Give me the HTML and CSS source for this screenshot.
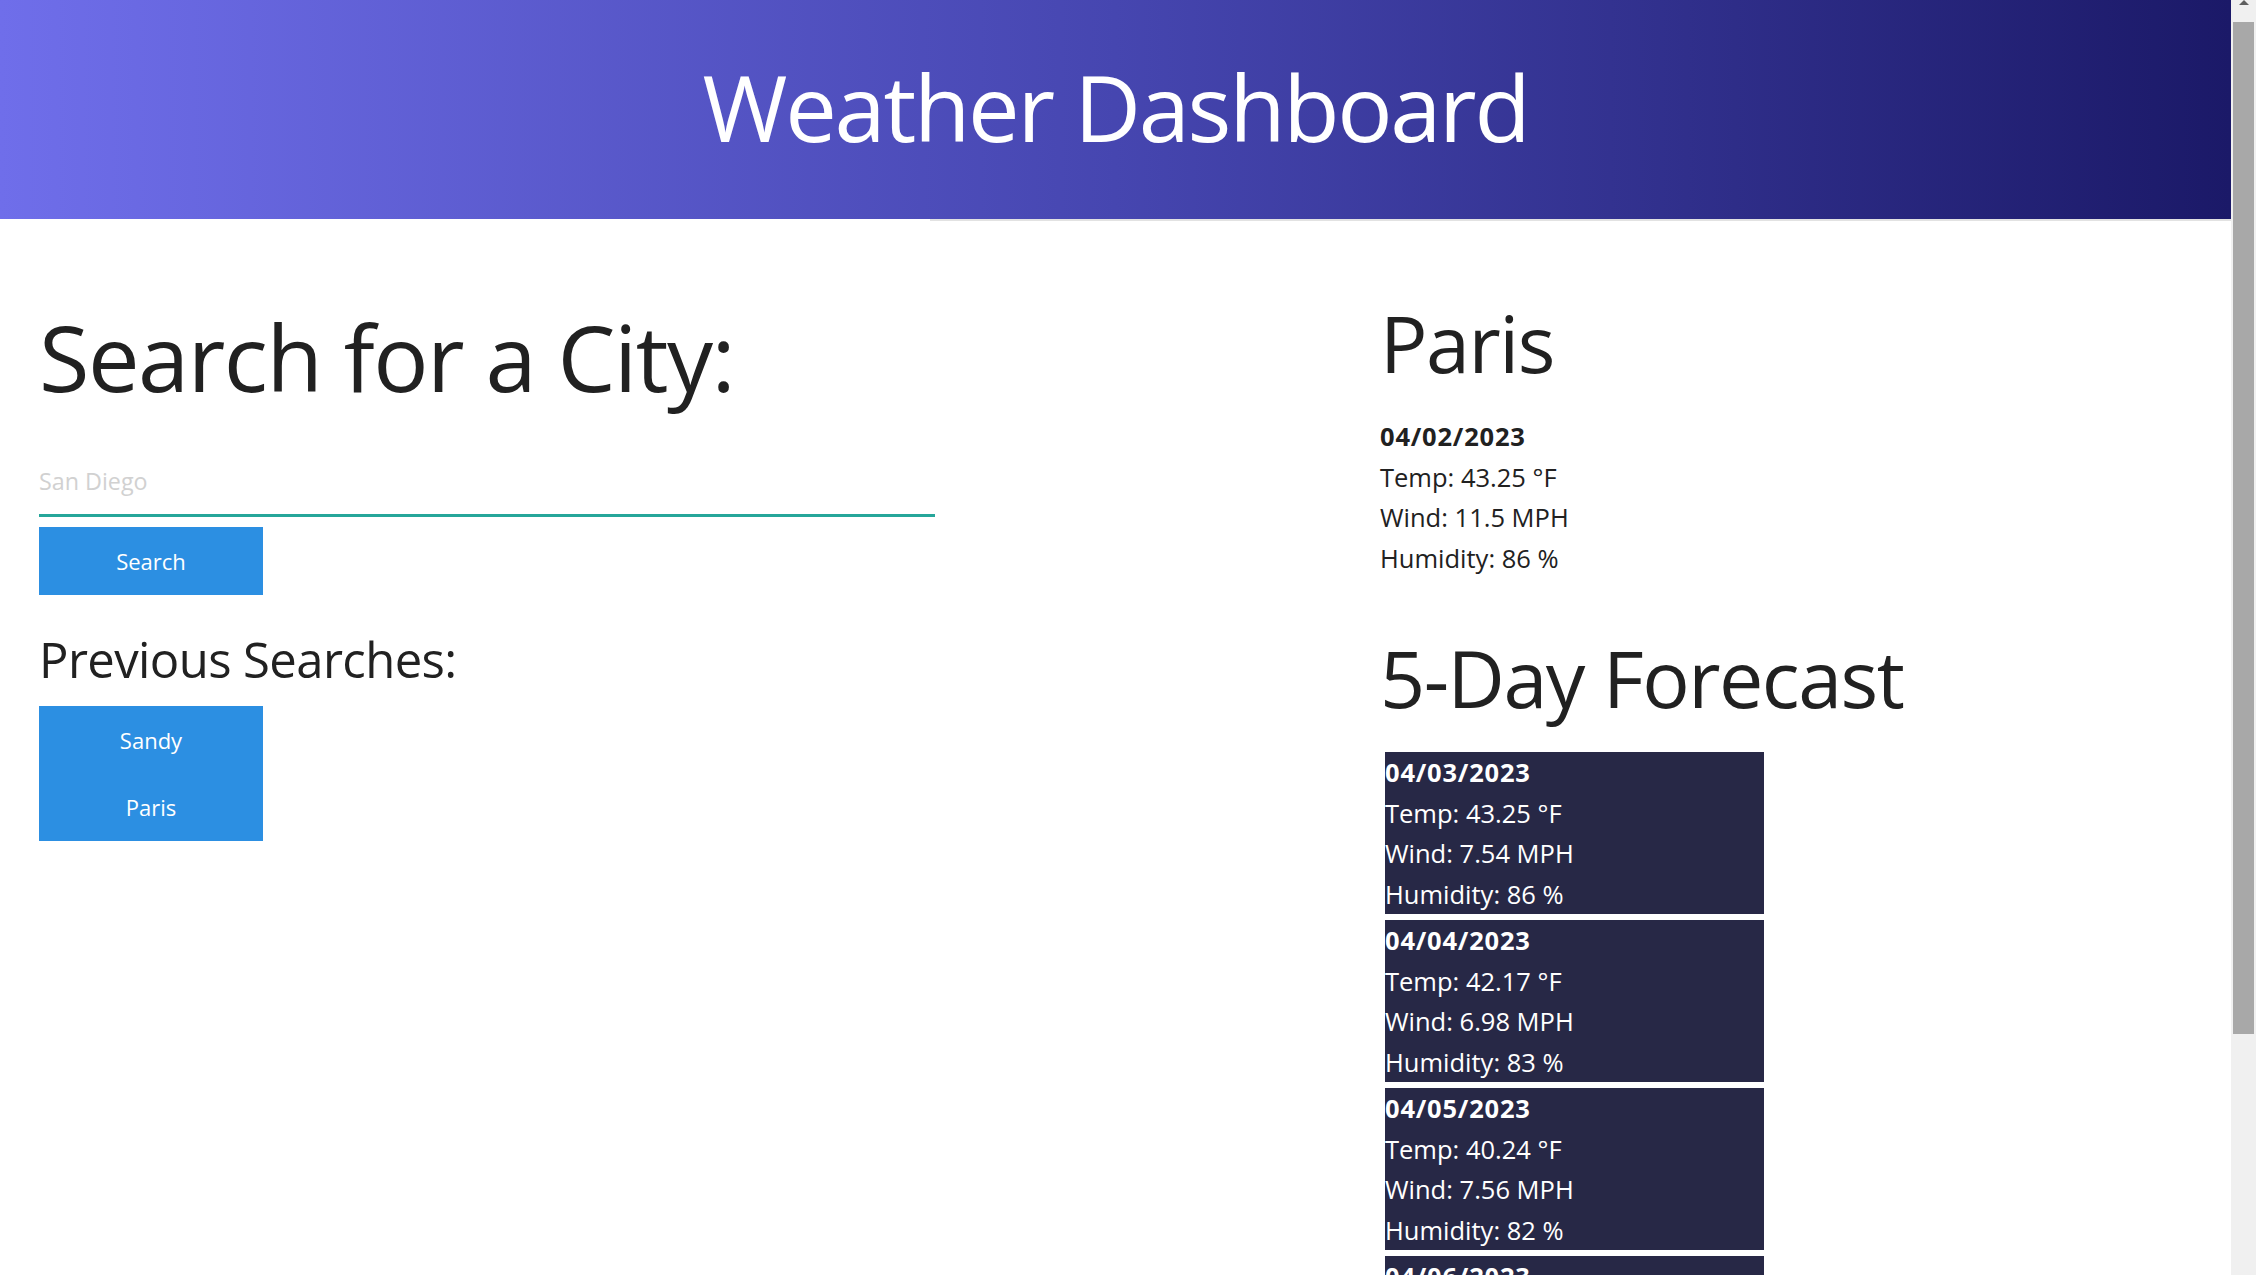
FILE: index.html
```html
<!DOCTYPE html>
<html lang="en">
<head>
<meta charset="utf-8">
<title>Weather Dashboard</title>
<link rel="stylesheet" href="styles.css">
</head>
<body>
  <div class="page">
    <header class="hero">
      <h1 class="hero-title">Weather Dashboard</h1>
    </header>
    <div class="hero-rule"></div>
    <main class="content">
      <section class="search-col">
        <h1 class="search-title">Search for a City:</h1>
        <input class="city-input" type="text" placeholder="San Diego">
        <button class="btn">Search</button>
        <h4 class="prev-title">Previous Searches:</h4>
        <div class="history">
          <button class="btn">Sandy</button>
          <button class="btn">Paris</button>
        </div>
      </section>
      <section class="weather-col">
        <h2 class="city-name">Paris</h2>
        <div class="today">
          <p class="line date">04/02/2023</p>
          <p class="line">Temp: 43.25 °F</p>
          <p class="line">Wind: 11.5 MPH</p>
          <p class="line">Humidity: 86 %</p>
        </div>
        <h2 class="forecast-title">5-Day Forecast</h2>
        <div class="forecast">
          <div class="card">
            <p class="line date">04/03/2023</p>
            <p class="line">Temp: 43.25 °F</p>
            <p class="line">Wind: 7.54 MPH</p>
            <p class="line">Humidity: 86 %</p>
          </div>
          <div class="card">
            <p class="line date">04/04/2023</p>
            <p class="line">Temp: 42.17 °F</p>
            <p class="line">Wind: 6.98 MPH</p>
            <p class="line">Humidity: 83 %</p>
          </div>
          <div class="card">
            <p class="line date">04/05/2023</p>
            <p class="line">Temp: 40.24 °F</p>
            <p class="line">Wind: 7.56 MPH</p>
            <p class="line">Humidity: 82 %</p>
          </div>
          <div class="card">
            <p class="line date">04/06/2023</p>
            <p class="line">Temp: 44.31 °F</p>
            <p class="line">Wind: 8.12 MPH</p>
            <p class="line">Humidity: 79 %</p>
          </div>
          <div class="card">
            <p class="line date">04/07/2023</p>
            <p class="line">Temp: 46.02 °F</p>
            <p class="line">Wind: 9.03 MPH</p>
            <p class="line">Humidity: 74 %</p>
          </div>
        </div>
      </section>
    </main>
  </div>
  <div class="scrollbar">
    <div class="scroll-arrow"></div>
    <div class="scroll-thumb"></div>
  </div>
</body>
</html>
```

FILE: styles.css
```css
html, body {
  margin: 0;
  padding: 0;
  height: 100%;
}

body {
  display: flex;
  overflow: hidden;
  font-family: "Open Sans", "Noto Sans", "DejaVu Sans", sans-serif;
  color: #212121;
  background: #ffffff;
}

.page {
  flex: 1;
  min-width: 0;
  height: 100vh;
  overflow: hidden;
}

/* Header */
.hero {
  height: 219px;
  box-sizing: border-box;
  padding-top: 58px;
  background: linear-gradient(to right, #6f6eea 0%, #4646b0 50%, #1b1968 100%);
  text-align: center;
}

.hero-title {
  margin: 0;
  font-size: 92px;
  line-height: 98px;
  font-weight: 400;
  letter-spacing: -2.3px;
  color: #ffffff;
}

.hero-rule {
  height: 2px;
  background: linear-gradient(to right, transparent 930px, #e2e2e2 930px);
}

/* Main two-column area */
.content {
  display: grid;
  grid-template-columns: 1380px 1fr;
}

.search-col {
  padding-left: 39px;
  display: flex;
  flex-direction: column;
  align-items: flex-start;
}

.search-title {
  margin: 81px 0 0 0;
  font-size: 92px;
  line-height: 110px;
  font-weight: 400;
  letter-spacing: -1.5px;
}

.city-input {
  margin-top: 41px;
  width: 896px;
  height: 64px;
  box-sizing: border-box;
  padding: 0 0 6px 0;
  border: none;
  border-bottom: 3px solid #26a69a;
  outline: none;
  font-family: inherit;
  font-size: 23.3px;
  color: #212121;
  background: transparent;
}

.city-input::placeholder {
  color: #d1d1d1;
}

.btn {
  width: 224px;
  height: 68px;
  border: none;
  border-radius: 0;
  background: #2c8fe2;
  color: #ffffff;
  font-family: inherit;
  font-size: 22px;
  padding: 0;
  margin: 0;
  cursor: pointer;
}

.city-input + .btn {
  margin-top: 10px;
}

.prev-title {
  margin: 34px 0 0 0;
  font-size: 49px;
  line-height: 60px;
  font-weight: 400;
  letter-spacing: -0.6px;
}

.history {
  margin-top: 17px;
  display: flex;
  flex-direction: column;
}

.history .btn {
  height: 67.5px;
}

/* Right column */
.weather-col {
  display: flex;
  flex-direction: column;
  align-items: flex-start;
}

.city-name,
.forecast-title {
  margin: 0;
  font-size: 79px;
  line-height: 94px;
  font-weight: 400;
  letter-spacing: -1.5px;
}

.city-name {
  margin-top: 75px;
}

.today {
  margin-top: 26px;
}

.forecast-title {
  margin-top: 53px;
}

.line {
  margin: 0;
  font-size: 25.5px;
  line-height: 40.5px;
  white-space: nowrap;
}

.date {
  font-weight: 700;
  letter-spacing: 0.8px;
}

.forecast {
  margin-top: 27px;
  display: flex;
  flex-direction: column;
  gap: 6px;
}

.card {
  margin-left: 5px;
  width: 379px;
  background: #272846;
  color: #ffffff;
}

/* Scrollbar */
.scrollbar {
  width: 25px;
  flex: none;
  height: 100vh;
  background: #f0f0f0;
  box-sizing: border-box;
  display: flex;
  flex-direction: column;
  align-items: center;
}

.scroll-arrow {
  width: 0;
  height: 0;
  border-left: 5px solid transparent;
  border-right: 5px solid transparent;
  border-bottom: 5px solid #5f5f5f;
}

.scroll-thumb {
  margin-top: 17px;
  width: 21px;
  height: 1012px;
  background: #a8a8a8;
}
```
